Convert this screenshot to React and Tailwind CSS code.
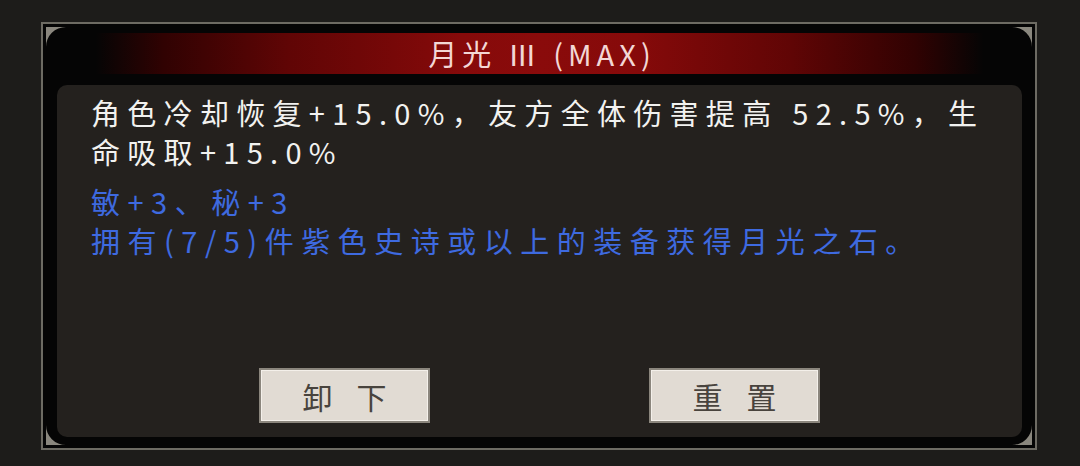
import React from "react";

const Corner = ({ className }) => (
  <svg
    className={`absolute w-[20px] h-[20px] ${className}`}
    viewBox="0 0 20 20"
  >
    <path d="M0 0 H20 A20 20 0 0 0 0 20 Z" fill="#8a877e" />
  </svg>
);

const GameButton = ({ chars }) => (
  <button className="w-[171px] h-[55px] flex items-center justify-center gap-[24px] border-2 border-[#8b867d] bg-[#e1dbd3] shadow-[inset_0_0_0_1px_#f4f0ea] text-[30px] leading-none text-[#48433d]">
    {chars.map((c) => (
      <span key={c}>{c}</span>
    ))}
  </button>
);

export default function App() {
  return (
    <div className="w-[1080px] h-[466px] bg-[#1d1c1a] pt-[22px] pl-[41px] font-['Noto_Sans_CJK_SC','Noto_Sans',sans-serif]">
      <div className="relative w-[996px] h-[428px] border-2 border-[#6d6b63] bg-[#050505] pt-[9px] pb-[11px] pl-[14px] pr-[13px] flex flex-col">
        <Corner className="left-[3px] top-[3px]" />
        <Corner className="right-[3px] top-[3px] rotate-90" />
        <Corner className="left-[3px] bottom-[3px] -rotate-90" />
        <Corner className="right-[3px] bottom-[3px] rotate-180" />

        {/* title bar */}
        <div className="relative h-[41px] flex items-center justify-center bg-[linear-gradient(90deg,transparent_4%,#300202_11%,#600505_24%,#860a0a_42%,#8a0b0b_50%,#860a0a_60%,#600505_76%,#300202_89%,transparent_96%)]">
          <span className="text-[29px] leading-none text-[#f3d7d5] tracking-[5px] pl-[5px]">
            月光&nbsp;Ⅲ (MAX)
          </span>
        </div>

        {/* content panel */}
        <div className="mt-[11px] flex-1 rounded-[10px] bg-[#24211e] px-[34px] pt-[8px] pb-[14px] flex flex-col">
          <p className="text-[29px] leading-[39px] tracking-[7.3px] text-[#f2f2f0] whitespace-nowrap">
            角色冷却恢复+15.0%，友方全体伤害提高 52.5%，生
            <br />
            命吸取+15.0%
          </p>
          <div className="mt-[11px] text-[29px] leading-[39px] tracking-[7.5px] text-[#3e6ae0] whitespace-nowrap">
            <p>敏+3、秘+3</p>
            <p>拥有(7/5)件紫色史诗或以上的装备获得月光之石。</p>
          </div>

          <div className="mt-auto flex justify-center gap-[219px]">
            <GameButton chars={["卸", "下"]} />
            <GameButton chars={["重", "置"]} />
          </div>
        </div>
      </div>
    </div>
  );
}
